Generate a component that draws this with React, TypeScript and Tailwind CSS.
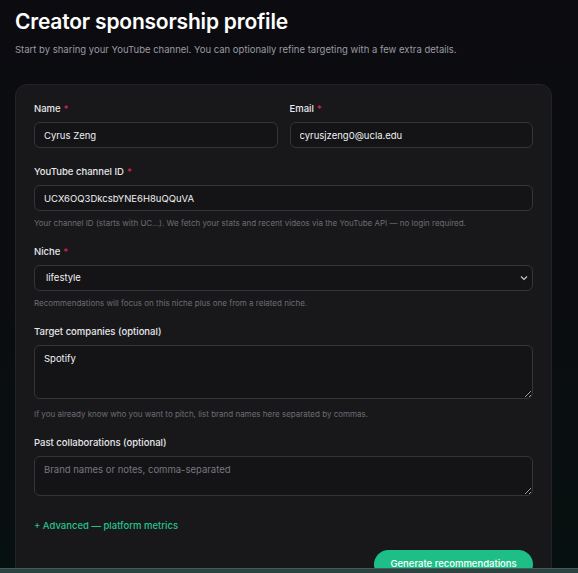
import React from 'react';

const font = { fontFamily: 'Inter, "Noto Sans", sans-serif' };

function Label({ text, required }: { text: string; required?: boolean }) {
  return (
    <div className="text-[9.5px] leading-4 font-medium text-[#e7e7ea] mb-[5px]">
      {text}
      {required && <span className="text-[#d12a4a] ml-[3px]">*</span>}
    </div>
  );
}

function Help({ children }: { children: React.ReactNode }) {
  return <p className="text-[8px] leading-3 text-[#6c6c73] mt-[6px]">{children}</p>;
}

const inputCls =
  'block w-full h-[26px] rounded-md border border-[#34343a] bg-[#141417] px-[9px] text-[9.5px] text-[#f0f0f2] outline-none';

export default function App() {
  return (
    <div
      className="min-h-screen w-full overflow-hidden bg-gradient-to-b from-[#0c0c10] via-[#0a0c0f] to-[#061110] px-[15px] pt-[8px]"
      style={font}
    >
      <h1 className="text-[21px] leading-7 font-semibold text-white tracking-[-0.2px]">Creator sponsorship profile</h1>
      <p className="mt-[6px] text-[9.5px] leading-4 text-[#9a9aa2]">
        Start by sharing your YouTube channel. You can optionally refine targeting with a few extra details.
      </p>

      <div className="mt-[26px] w-[537px] rounded-xl border border-[#232327] bg-[#18181b] px-[18px] pt-[16px] pb-8">
        <div className="grid grid-cols-2 gap-x-3">
          <div>
            <Label text="Name" required />
            <input className={inputCls} defaultValue="Cyrus Zeng" />
          </div>
          <div>
            <Label text="Email" required />
            <input className={inputCls} defaultValue="cyrusjzeng0@ucla.edu" />
          </div>
        </div>

        <div className="mt-4">
          <Label text="YouTube channel ID" required />
          <input className={inputCls} defaultValue="UCX6OQ3DkcsbYNE6H8uQQuVA" />
          <Help>Your channel ID (starts with UC…). We fetch your stats and recent videos via the YouTube API — no login required.</Help>
        </div>

        <div className="mt-[15px]">
          <Label text="Niche" required />
          <div className="relative">
            <div className={inputCls + ' flex items-center px-[11px]'}>lifestyle</div>
            <svg
              className="absolute right-[5px] top-[10px]"
              width="8"
              height="6"
              viewBox="0 0 8 6"
              fill="none"
              stroke="#c8c8cc"
              strokeWidth="1.2"
            >
              <path d="M1 1.5l3 3 3-3" />
            </svg>
          </div>
          <Help>Recommendations will focus on this niche plus one from a related niche.</Help>
        </div>

        <div className="mt-[15px]">
          <Label text="Target companies (optional)" />
          <textarea
            className="block w-full h-[54px] rounded-md border border-[#34343a] bg-[#141417] px-[9px] py-[6px] text-[9.5px] text-[#f0f0f2] outline-none resize-y"
            defaultValue="Spotify"
          />
          <p className="text-[8px] leading-3 text-[#6c6c73] mt-[9px]">
            If you already know who you want to pitch, list brand names here separated by commas.
          </p>
        </div>

        <div className="mt-[15px]">
          <Label text="Past collaborations (optional)" />
          <textarea
            className="block w-full h-[40px] rounded-md border border-[#34343a] bg-[#141417] px-[9px] py-[6px] text-[9.5px] text-[#f0f0f2] placeholder:text-[#77777e] outline-none resize-y"
            placeholder="Brand names or notes, comma-separated"
          />
        </div>

        <button className="mt-[22px] block text-[9.5px] leading-4 font-medium text-[#27c28a]">
          + Advanced — platform metrics
        </button>

        <div className="mt-[16px] flex justify-end">
          <button className="h-[29px] w-[159px] rounded-full bg-[#1dbf86] text-[9.5px] font-medium text-white">
            Generate recommendations
          </button>
        </div>
      </div>

      <div className="fixed bottom-0 left-0 right-0 h-[5px] border-t border-[#435b5a] bg-[#2a4240]" />
    </div>
  );
}
